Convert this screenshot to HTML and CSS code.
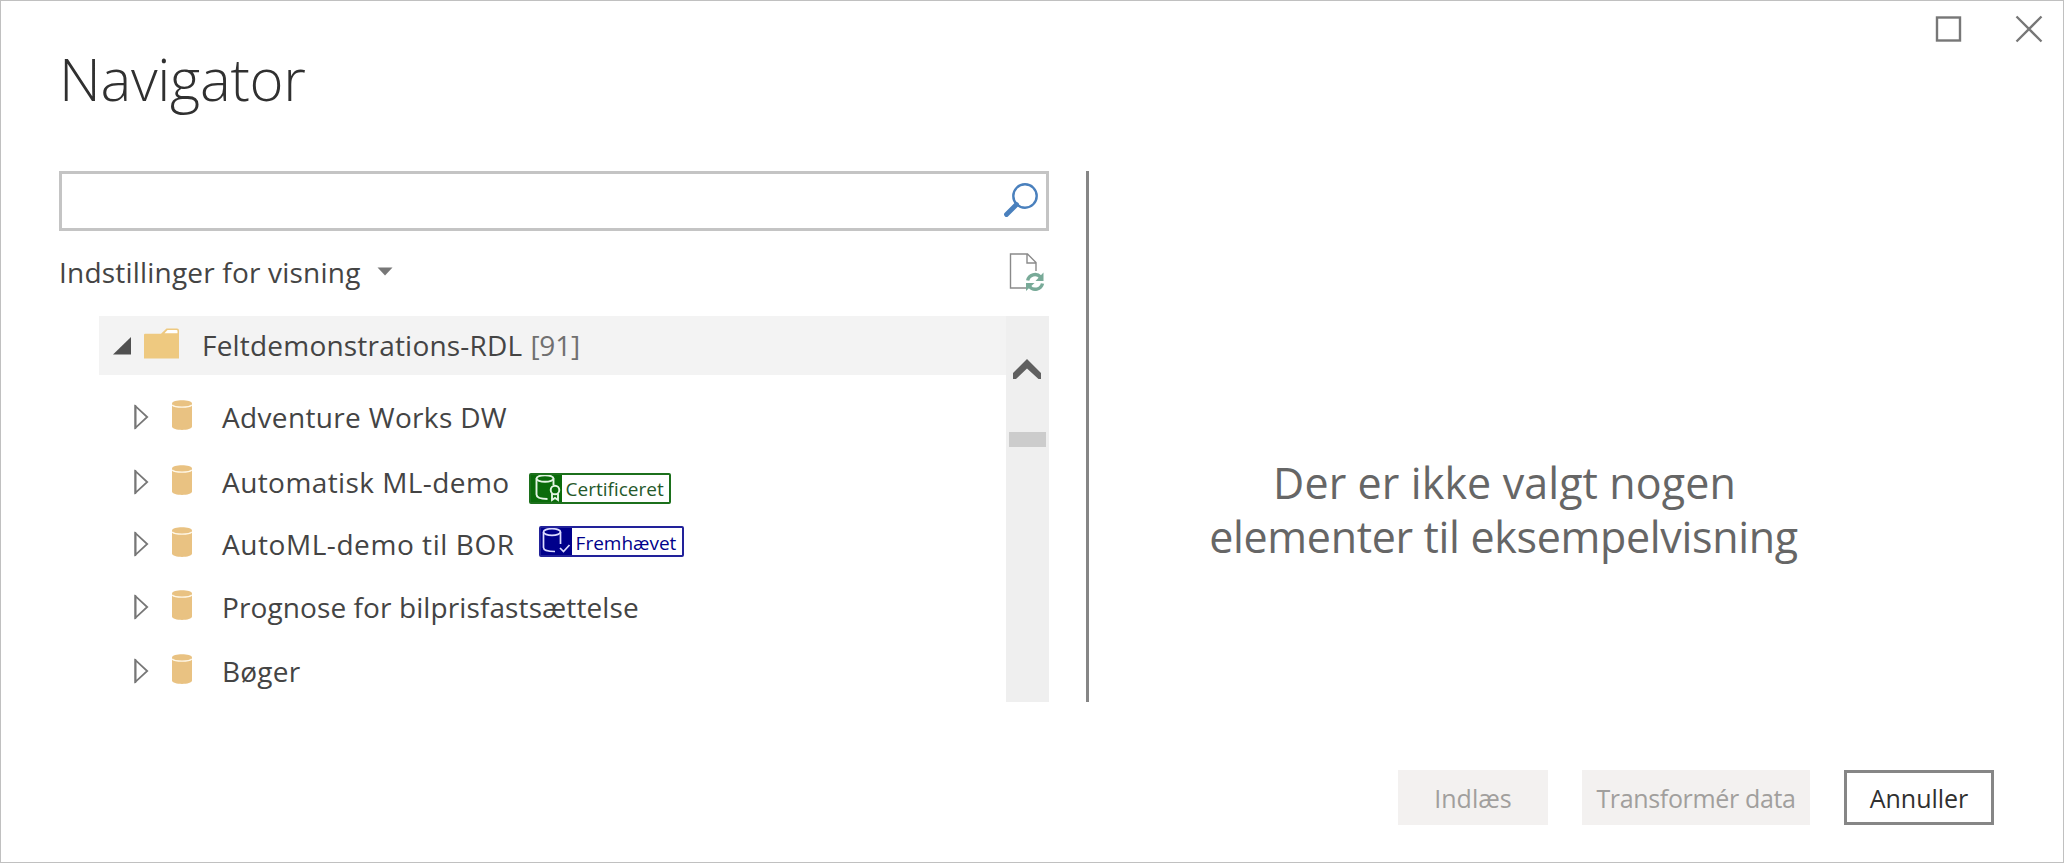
FILE: index.html
```
<!DOCTYPE html>
<html lang="da">
<head>
<meta charset="utf-8">
<title>Navigator</title>
<link rel="stylesheet" href="styles.css">
</head>
<body>
<svg class="defs" width="0" height="0" aria-hidden="true">
  <symbol id="expand" viewBox="0 0 16 26"><path d="M2.500 2.200V23.800L14.200 13Z" fill="#fff" stroke="#777" stroke-width="1.800"/><path d="M2.300 1V25" stroke="#777" stroke-width="1.800"/></symbol>
  <symbol id="cylinder" viewBox="0 0 20 30"><path d="M0 3.5C0-.9 20-.9 20 3.5V26.500C20 31 0 31 0 26.500Z" fill="#e9c282"/><path d="M.2 4.800C2 7.900 18 7.900 19.800 4.800" fill="none" stroke="#fff8e8" stroke-width="1.400"/></symbol>
</svg>
<div class="window">
  <header class="header">
    <h1 class="title">Navigator</h1>
    <div class="controls">
      <svg width="27" height="27" viewBox="0 0 27 27"><rect x="2" y="2.500" width="23" height="23" fill="none" stroke="#777" stroke-width="2.400"/></svg>
      <svg width="28" height="28" viewBox="0 0 28 28"><path d="M1.500 1.500L26.500 26.500M26.500 1.500L1.500 26.500" stroke="#777" stroke-width="2.300"/></svg>
    </div>
  </header>
  <main class="main">
    <section class="left">
      <div class="search">
        <svg width="36" height="36" viewBox="0 0 36 36"><circle cx="22" cy="14" r="11.700" fill="none" stroke="#4a80bd" stroke-width="2.400"/><path d="M13.500 22.500L3.500 32.500" stroke="#4a80bd" stroke-width="4.800" stroke-linecap="round"/></svg>
      </div>
      <div class="options">
        <span class="options-label">Indstillinger for visning</span>
        <svg class="caret" width="16" height="9" viewBox="0 0 16 9"><path d="M.5.500H15.500L8 8.500Z" fill="#777"/></svg>
        <svg class="refresh" width="36" height="40" viewBox="0 0 36 40"><path d="M17 36H1.500V2H18.500L27 10.500V19M18 2V11H27" fill="none" stroke="#8a8a8a" stroke-width="1.400"/><g fill="none" stroke="#78aa98" stroke-width="3.400"><path d="M18.700 28.500A7.400 7.400 0 0 1 31.500 25"/><path d="M33.500 31.500A7.400 7.400 0 0 1 20.500 34.500"/></g><path d="M34.500 20.500V29H26.500Z" fill="#78aa98"/><path d="M17 39V31H25.500Z" fill="#78aa98"/></svg>
      </div>
      <div class="tree">
        <div class="rows">
          <div class="root">
            <svg class="collapse" width="18" height="18" viewBox="0 0 18 18"><path d="M0 17.500H18V0Z" fill="#505050"/></svg>
            <svg class="folder" width="35" height="31" viewBox="0 0 35 31"><path d="M1 5.700H17L22.500.500H33Q35 .500 35 2.500V30.500H0V7Q0 5.700 1 5.700Z" fill="#eec980"/><path d="M20.500 5.300L23.500 2H32.500Q33.500 2 33.500 3V5.300Z" fill="#fff"/></svg>
            <span class="root-label">Feltdemonstrations-RDL</span><span class="root-label count">[91]</span>
          </div>
          <div class="row r1"><svg class="expand"><use href="#expand"/></svg><svg class="cyl"><use href="#cylinder"/></svg><span>Adventure Works DW</span></div>
          <div class="row r2"><svg class="expand"><use href="#expand"/></svg><svg class="cyl"><use href="#cylinder"/></svg><span>Automatisk ML-demo</span>
            <span class="badge certified"><svg width="31" height="31" viewBox="0 0 31 31"><g fill="none" stroke="#e4f4e4" stroke-width="1.900"><ellipse cx="14" cy="5.500" rx="8.500" ry="3.300"/><path d="M5.500 5.500V21.500C5.500 24.500 10 26 16.500 26M22.500 5.500V12"/><circle cx="24" cy="17" r="4.300"/><path d="M21 20.500V27L24 25L27 27V20.500"/></g></svg><span>Certificeret</span></span></div>
          <div class="row r3"><svg class="expand"><use href="#expand"/></svg><svg class="cyl"><use href="#cylinder"/></svg><span>AutoML-demo til BOR</span>
            <span class="badge promoted"><svg width="31" height="31" viewBox="0 0 31 31"><g fill="none" stroke="#dcdcff" stroke-width="1.700"><ellipse cx="11" cy="6" rx="8.500" ry="3.300"/><path d="M2.500 6V21.500C2.500 24 6 25.500 14 25.500M19.500 6V18M19 22L22.500 25.500L28.500 19"/></g></svg><span>Fremhævet</span></span></div>
          <div class="row r4"><svg class="expand"><use href="#expand"/></svg><svg class="cyl"><use href="#cylinder"/></svg><span>Prognose for bilprisfastsættelse</span></div>
          <div class="row r5"><svg class="expand"><use href="#expand"/></svg><svg class="cyl"><use href="#cylinder"/></svg><span>Bøger</span></div>
        </div>
        <div class="scrollbar">
          <svg class="up" width="28" height="20" viewBox="0 0 28 20"><path d="M0 14L14 0L28 14V20H25.500L14 9.500L3 20H0Z" fill="#606060"/></svg>
          <div class="thumb"></div>
        </div>
      </div>
    </section>
    <section class="preview">
      <p class="message">Der er ikke valgt nogen<br><span class="message-end">elementer til eksempelvisning</span></p>
    </section>
  </main>
  <footer class="footer">
    <button class="btn" disabled>Indlæs</button>
    <button class="btn wide" disabled>Transformér data</button>
    <button class="btn cancel">Annuller</button>
  </footer>
</div>
</body>
</html>
```
FILE: styles.css
```
* { box-sizing: border-box; }
body { margin: 0; background: #fff; font-family: "Open Sans", "Noto Sans", sans-serif; color: #444; }
svg { display: block; flex: none; }
.defs { position: absolute; }
.window { width: 2064px; height: 863px; border: 1px solid #c0c0c0; display: flex; flex-direction: column; }
.header { height: 170px; display: flex; justify-content: space-between; padding: 14px 20px 0 58px; }
.title { margin: 24px 0 0; font-size: 58px; font-weight: 300; line-height: 80px; letter-spacing: -.3px; color: #303030; }
.controls { display: flex; gap: 53px; }
.main { display: flex; height: 531px; padding-left: 58px; }
.left { width: 990px; }
.search { height: 60px; border: 3px solid #c4c4c4; display: flex; justify-content: flex-end; padding: 8px 7px 0 0; }
.options { height: 85px; display: flex; align-items: center; font-size: 28px; }
.options-label { line-height: 80px; letter-spacing: .2px; margin-top: -3px; }
.caret { margin: -4px 0 0 16px; }
.refresh { margin: -4px 4px 0 auto; }
.tree { display: flex; height: 386px; padding-left: 40px; }
.rows { flex: 1; font-size: 28px; }
.root { height: 59px; margin-bottom: 10px; background: #f3f3f3; display: flex; align-items: center; padding-left: 14px; }
.root-label { margin-top: -2px; letter-spacing: .2px; }
.folder { margin: -4px 23px 0 13px; }
.count { margin-left: 8px; color: #707070; letter-spacing: -.2px; }
.row { display: flex; align-items: center; padding-left: 34px; white-space: nowrap; }
.r1 { height: 64px; letter-spacing: .34px; }
.r2 { height: 65px; letter-spacing: .42px; }
.r3 { height: 60px; letter-spacing: .56px; }
.r4 { height: 66px; letter-spacing: .1px; }
.r5 { height: 62px; letter-spacing: .2px; }
.expand { width: 16px; height: 26px; }
.cyl { width: 20px; height: 30px; margin: -4px 30px 0 23px; }
.badge { display: flex; align-items: center; height: 31px; border: 2px solid; border-radius: 2px; font-size: 19px; letter-spacing: 0; overflow: hidden; }
.badge svg { margin-right: 4px; }
.badge span { margin-top: 2px; }
.certified { width: 142px; margin: 13px 0 0 19px; border-color: #1c701c; color: #24582a; }
.certified svg { background: #0a6b0a; }
.promoted { width: 145px; margin: -5px 0 0 24px; border-color: #22229a; color: #00008b; }
.promoted svg { background: #00008b; }
.scrollbar { width: 43px; background: #efefef; padding-top: 43px; display: flex; flex-direction: column; align-items: center; gap: 53px; }
.up { margin-right: 1px; }
.thumb { width: 37px; height: 15px; background: #ccc; }
.preview { margin-left: 37px; border-left: 3px solid #868686; width: 834px; padding-top: 285px; }
.message { margin: 0; text-align: center; font-size: 43px; line-height: 54px; letter-spacing: .1px; color: #666; }
.message-end { letter-spacing: -.33px; margin-right: 2px; }
.footer { display: flex; justify-content: flex-end; gap: 34px; padding: 68px 69px 0 0; }
.btn { width: 150px; height: 55px; padding: 0; border: 0; background: #f3f1f0; color: #a19f9d; font: 25px "Open Sans", "Noto Sans", sans-serif; white-space: nowrap; }
.wide { width: 228px; letter-spacing: -.35px; }
.cancel { background: #fff; border: 3px solid #868686; color: #303030; }
```
